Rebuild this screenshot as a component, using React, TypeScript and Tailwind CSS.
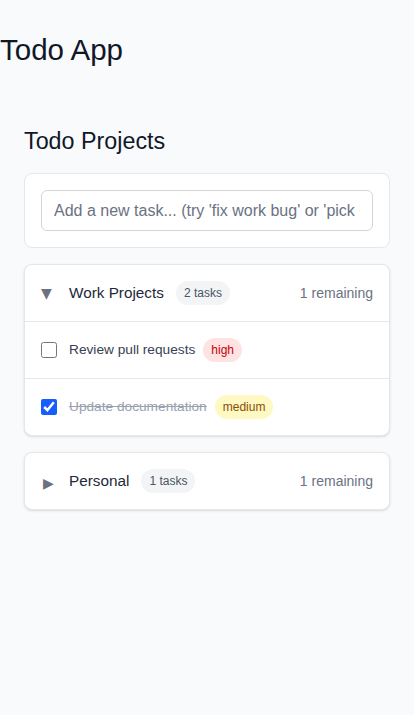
import { useState } from "react";

type Task = { id: number; title: string; priority: "high" | "medium" | "low"; done: boolean };
type Project = { id: number; name: string; open: boolean; tasks: Task[] };

const priorityStyles: Record<Task["priority"], string> = {
  high: "bg-red-100 text-red-700",
  medium: "bg-yellow-100 text-yellow-800",
  low: "bg-green-100 text-green-700",
};

const initialProjects: Project[] = [
  {
    id: 1,
    name: "Work Projects",
    open: true,
    tasks: [
      { id: 1, title: "Review pull requests", priority: "high", done: false },
      { id: 2, title: "Update documentation", priority: "medium", done: true },
    ],
  },
  {
    id: 2,
    name: "Personal",
    open: false,
    tasks: [{ id: 3, title: "Pick up groceries", priority: "low", done: false }],
  },
];

export default function App() {
  const [projects, setProjects] = useState(initialProjects);

  const toggleProject = (id: number) =>
    setProjects((ps) => ps.map((p) => (p.id === id ? { ...p, open: !p.open } : p)));

  const toggleTask = (pid: number, tid: number) =>
    setProjects((ps) =>
      ps.map((p) =>
        p.id === pid
          ? { ...p, tasks: p.tasks.map((t) => (t.id === tid ? { ...t, done: !t.done } : t)) }
          : p
      )
    );

  return (
    <div className="min-h-[715px] bg-gray-50 text-gray-900 font-['Liberation_Sans',sans-serif]">
      <h1 className="pt-[30px] text-[29.5px] leading-[40px]">Todo App</h1>

      <div className="px-6 pt-[55px]">
        <h2 className="text-[23.3px] leading-8 mb-4">Todo Projects</h2>

        <div className="bg-white border border-gray-200 rounded-lg p-4 mb-4">
          <input
            type="text"
            placeholder="Add a new task... (try 'fix work bug' or 'pick up groceries')"
            className="w-full h-[41px] px-3 border border-gray-300 rounded-md text-base placeholder:text-gray-500 outline-none"
          />
        </div>

        <div className="flex flex-col gap-4">
          {projects.map((p) => {
            const remaining = p.tasks.filter((t) => !t.done).length;
            return (
              <div key={p.id} className="bg-white border border-gray-200 rounded-lg shadow-sm">
                <div
                  className="flex items-center h-[56px] px-4 cursor-pointer"
                  onClick={() => toggleProject(p.id)}
                >
                  <span
                    className={`w-3 text-gray-500 text-sm leading-none mr-4 font-['DejaVu_Sans',sans-serif] ${
                      p.open ? "" : "pt-[3px] pl-[2px]"
                    }`}
                  >
                    {p.open ? "▼" : "▶"}
                  </span>
                  <span className="text-[15.3px] text-gray-800">{p.name}</span>
                  <span className="ml-3 px-2 py-1 rounded-full bg-gray-100 text-xs text-gray-600">
                    {p.tasks.length} tasks
                  </span>
                  <span className="ml-auto text-sm text-gray-500">{remaining} remaining</span>
                </div>
                {p.open &&
                  p.tasks.map((t) => (
                    <div key={t.id} className="flex items-center h-[57px] px-4 border-t border-gray-200">
                      <input
                        type="checkbox"
                        checked={t.done}
                        onChange={() => toggleTask(p.id, t.id)}
                        className="w-4 h-4 mr-3 accent-blue-600"
                      />
                      <span
                        className={
                          t.done
                            ? "text-[13.7px] text-gray-400 line-through"
                            : "text-[13.7px] text-gray-700"
                        }
                      >
                        {t.title}
                      </span>
                      <span className={`ml-2 px-2 py-1 rounded-full text-xs ${priorityStyles[t.priority]}`}>
                        {t.priority}
                      </span>
                    </div>
                  ))}
              </div>
            );
          })}
        </div>
      </div>
    </div>
  );
}
